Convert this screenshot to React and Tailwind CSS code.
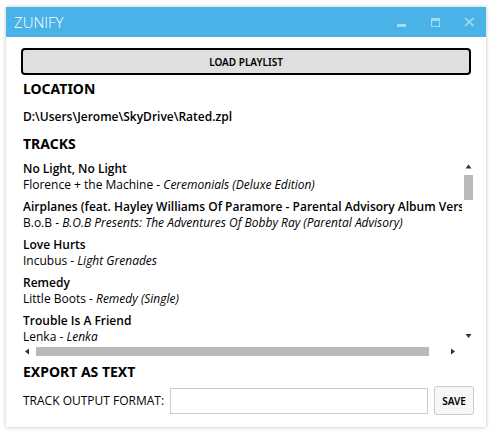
const tracks = [
  { title: "No Light, No Light", artist: "Florence + the Machine", album: "Ceremonials (Deluxe Edition)" },
  {
    title: "Airplanes (feat. Hayley Williams Of Paramore - Parental Advisory Album Version)",
    artist: "B.o.B",
    album: "B.O.B Presents: The Adventures Of Bobby Ray (Parental Advisory)",
  },
  { title: "Love Hurts", artist: "Incubus", album: "Light Grenades" },
  { title: "Remedy", artist: "Little Boots", album: "Remedy (Single)" },
  { title: "Trouble Is A Friend", artist: "Lenka", album: "Lenka" },
];

function TitleBar() {
  return (
    <header className="flex h-[30px] items-center justify-between bg-[#49b3e8] pl-2 pr-3">
      <h1 className="text-[15px] leading-5 font-light text-white">ZUNIFY</h1>
      <div className="flex items-center gap-6 text-[#a4d9f4]">
        <button type="button" aria-label="Minimize">
          <svg className="block h-[10px] w-[10px]" viewBox="0 0 10 10" fill="currentColor">
            <path d="M1 7h9v3H1z" />
          </svg>
        </button>
        <button type="button" aria-label="Maximize">
          <svg className="block h-[10px] w-[10px]" viewBox="0 0 10 10" fill="currentColor">
            <path fillRule="evenodd" d="M1 1h9v9H1zM2 4v5h7V4z" />
          </svg>
        </button>
        <button type="button" aria-label="Close">
          <svg className="block h-[10px] w-[10px]" viewBox="0 0 10 10" fill="none" stroke="currentColor" strokeWidth="1.7">
            <path d="M1 1l8.500 8M9.500 1L1 9" />
          </svg>
        </button>
      </div>
    </header>
  );
}

function Heading({ children }) {
  return <h2 className="pl-[2px] font-['Noto_Sans',sans-serif] text-[14px] leading-5 font-bold">{children}</h2>;
}

function Arrow({ d, label }) {
  return (
    <button type="button" aria-label={label} className="shrink-0">
      <svg className="block h-[9px] w-[9px]" viewBox="0 0 9 9" fill="#333">
        <path d={d} />
      </svg>
    </button>
  );
}

function TrackList() {
  return (
    <div className="mt-[7px] pr-px pl-[2px]">
      <div className="flex gap-[2px]">
        <ul className="flex min-w-0 flex-1 flex-col gap-[6px] overflow-hidden whitespace-nowrap">
          {tracks.map((t) => (
            <li key={t.title}>
              <div className="font-semibold">{t.title}</div>
              <div>
                {t.artist} - <i>{t.album}</i>
              </div>
            </li>
          ))}
        </ul>
        <div className="flex flex-col justify-between pt-px pb-[5px]">
          <div className="flex flex-col">
            <Arrow label="Scroll up" d="M1.500 6.500 4.500 2.500 7.500 6.500z" />
            <div className="mt-1 h-[25px] w-[9px] bg-[#b9b9b9]" />
          </div>
          <Arrow label="Scroll down" d="M1.500 3 4.500 7 7.500 3z" />
        </div>
      </div>
      <div className="mt-[2px] mr-[15px] flex">
        <Arrow label="Scroll left" d="M6 1.500 2 4.500 6 7.500z" />
        <div className="mr-[20px] ml-1 h-[9px] flex-1 bg-[#b9b9b9]" />
        <Arrow label="Scroll right" d="M2 1.500 6 4.500 2 7.500z" />
      </div>
    </div>
  );
}

export default function App() {
  return (
    <div className="bg-white px-[6px] py-[7px] font-['Open_Sans',sans-serif] text-[12px] leading-4 text-black">
      <main className="bg-white shadow-[0_0_4px_rgba(0,0,0,0.25)]">
        <TitleBar />
        <div className="pt-[11px] pr-3 pb-3 pl-[15px]">
          <button
            type="button"
            className="flex h-[27px] w-[calc(100%-3px)] items-center justify-center rounded-[4px] border-2 border-black bg-[#dfdfdf] font-['Noto_Sans',sans-serif] text-[10px] font-semibold"
          >
            LOAD PLAYLIST
          </button>
          <section className="mt-1">
            <Heading>LOCATION</Heading>
            <p className="mt-[10px] pl-[2px] font-semibold">D:\Users\Jerome\SkyDrive\Rated.zpl</p>
          </section>
          <section className="mt-[9px]">
            <Heading>TRACKS</Heading>
            <TrackList />
          </section>
          <section className="mt-[6px]">
            <Heading>EXPORT AS TEXT</Heading>
            <form className="mt-1 flex items-center pl-[2px]" onSubmit={(e) => e.preventDefault()}>
              <label htmlFor="format" className="w-[147px] shrink-0 whitespace-nowrap">
                TRACK OUTPUT FORMAT:
              </label>
              <input id="format" type="text" className="h-[26px] min-w-0 flex-1 border border-[#ccc] bg-white px-1" />
              <button
                type="submit"
                className="ml-[6px] h-[29px] w-[40px] rounded-[3px] border border-[#ccc] bg-[#f7f7f7] font-['Noto_Sans',sans-serif] text-[10px] font-semibold"
              >
                SAVE
              </button>
            </form>
          </section>
        </div>
      </main>
    </div>
  );
}
